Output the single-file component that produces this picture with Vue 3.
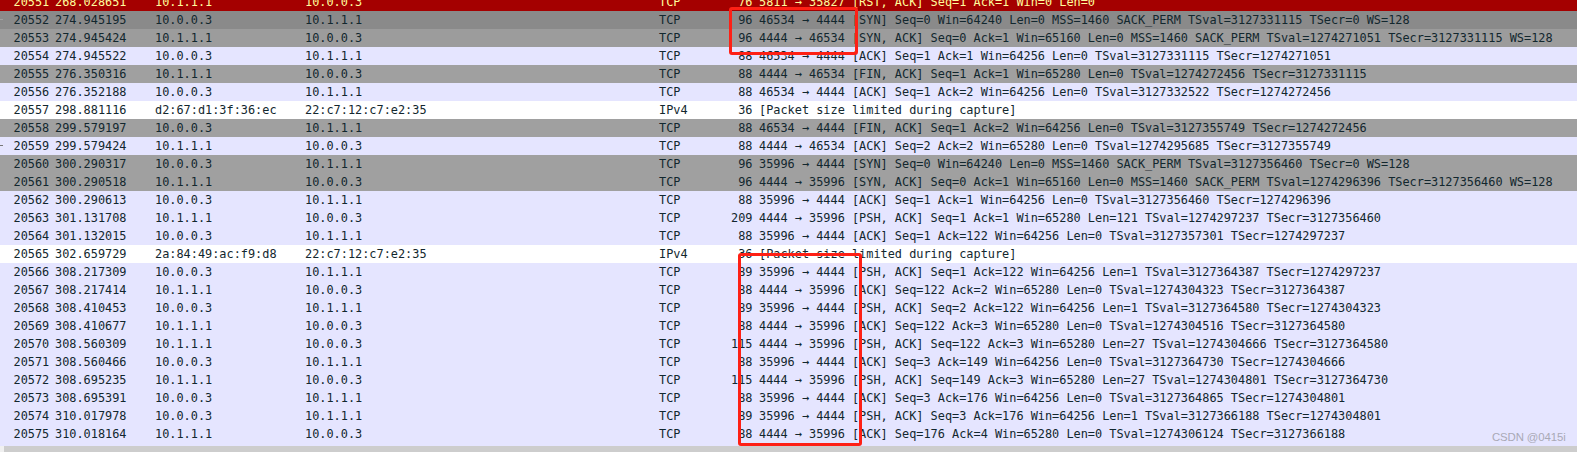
<script setup>
const raw = `20551|268.028651|10.1.1.1|10.0.0.3|TCP|76|5811 → 35827 [RST, ACK] Seq=1 Ack=1 Win=0 Len=0|rst
20552|274.945195|10.0.0.3|10.1.1.1|TCP|96|46534 → 4444 [SYN] Seq=0 Win=64240 Len=0 MSS=1460 SACK_PERM TSval=3127331115 TSecr=0 WS=128|syn
20553|274.945424|10.1.1.1|10.0.0.3|TCP|96|4444 → 46534 [SYN, ACK] Seq=0 Ack=1 Win=65160 Len=0 MSS=1460 SACK_PERM TSval=1274271051 TSecr=3127331115 WS=128|synack
20554|274.945522|10.0.0.3|10.1.1.1|TCP|88|46534 → 4444 [ACK] Seq=1 Ack=1 Win=64256 Len=0 TSval=3127331115 TSecr=1274271051|tcp
20555|276.350316|10.1.1.1|10.0.0.3|TCP|88|4444 → 46534 [FIN, ACK] Seq=1 Ack=1 Win=65280 Len=0 TSval=1274272456 TSecr=3127331115|gray
20556|276.352188|10.0.0.3|10.1.1.1|TCP|88|46534 → 4444 [ACK] Seq=1 Ack=2 Win=64256 Len=0 TSval=3127332522 TSecr=1274272456|tcp
20557|298.881116|d2:67:d1:3f:36:ec|22:c7:12:c7:e2:35|IPv4|36|[Packet size limited during capture]|white
20558|299.579197|10.0.0.3|10.1.1.1|TCP|88|46534 → 4444 [FIN, ACK] Seq=1 Ack=2 Win=64256 Len=0 TSval=3127355749 TSecr=1274272456|gray
20559|299.579424|10.1.1.1|10.0.0.3|TCP|88|4444 → 46534 [ACK] Seq=2 Ack=2 Win=65280 Len=0 TSval=1274295685 TSecr=3127355749|tcp
20560|300.290317|10.0.0.3|10.1.1.1|TCP|96|35996 → 4444 [SYN] Seq=0 Win=64240 Len=0 MSS=1460 SACK_PERM TSval=3127356460 TSecr=0 WS=128|gray
20561|300.290518|10.1.1.1|10.0.0.3|TCP|96|4444 → 35996 [SYN, ACK] Seq=0 Ack=1 Win=65160 Len=0 MSS=1460 SACK_PERM TSval=1274296396 TSecr=3127356460 WS=128|gray
20562|300.290613|10.0.0.3|10.1.1.1|TCP|88|35996 → 4444 [ACK] Seq=1 Ack=1 Win=64256 Len=0 TSval=3127356460 TSecr=1274296396|tcp
20563|301.131708|10.1.1.1|10.0.0.3|TCP|209|4444 → 35996 [PSH, ACK] Seq=1 Ack=1 Win=65280 Len=121 TSval=1274297237 TSecr=3127356460|tcp
20564|301.132015|10.0.0.3|10.1.1.1|TCP|88|35996 → 4444 [ACK] Seq=1 Ack=122 Win=64256 Len=0 TSval=3127357301 TSecr=1274297237|tcp
20565|302.659729|2a:84:49:ac:f9:d8|22:c7:12:c7:e2:35|IPv4|36|[Packet size limited during capture]|white
20566|308.217309|10.0.0.3|10.1.1.1|TCP|89|35996 → 4444 [PSH, ACK] Seq=1 Ack=122 Win=64256 Len=1 TSval=3127364387 TSecr=1274297237|tcp
20567|308.217414|10.1.1.1|10.0.0.3|TCP|88|4444 → 35996 [ACK] Seq=122 Ack=2 Win=65280 Len=0 TSval=1274304323 TSecr=3127364387|tcp
20568|308.410453|10.0.0.3|10.1.1.1|TCP|89|35996 → 4444 [PSH, ACK] Seq=2 Ack=122 Win=64256 Len=1 TSval=3127364580 TSecr=1274304323|tcp
20569|308.410677|10.1.1.1|10.0.0.3|TCP|88|4444 → 35996 [ACK] Seq=122 Ack=3 Win=65280 Len=0 TSval=1274304516 TSecr=3127364580|tcp
20570|308.560309|10.1.1.1|10.0.0.3|TCP|115|4444 → 35996 [PSH, ACK] Seq=122 Ack=3 Win=65280 Len=27 TSval=1274304666 TSecr=3127364580|tcp
20571|308.560466|10.0.0.3|10.1.1.1|TCP|88|35996 → 4444 [ACK] Seq=3 Ack=149 Win=64256 Len=0 TSval=3127364730 TSecr=1274304666|tcp
20572|308.695235|10.1.1.1|10.0.0.3|TCP|115|4444 → 35996 [PSH, ACK] Seq=149 Ack=3 Win=65280 Len=27 TSval=1274304801 TSecr=3127364730|tcp
20573|308.695391|10.0.0.3|10.1.1.1|TCP|88|35996 → 4444 [ACK] Seq=3 Ack=176 Win=64256 Len=0 TSval=3127364865 TSecr=1274304801|tcp
20574|310.017978|10.0.0.3|10.1.1.1|TCP|89|35996 → 4444 [PSH, ACK] Seq=3 Ack=176 Win=64256 Len=1 TSval=3127366188 TSecr=1274304801|tcp
20575|310.018164|10.1.1.1|10.0.0.3|TCP|88|4444 → 35996 [ACK] Seq=176 Ack=4 Win=65280 Len=0 TSval=1274306124 TSecr=3127366188|tcp`
const rows = raw.split('\n').map((l) => {
  const [no, time, src, dst, proto, len, info, kind] = l.split('|')
  return { no, time, src, dst, proto, len, info, kind }
})
</script>

<template>
  <div class="page">
    <div class="list">
      <div v-for="r in rows" :key="r.no" class="row" :class="r.kind">
        <span class="no">{{ r.no }}</span>
        <span>{{ r.time }}</span>
        <span>{{ r.src }}</span>
        <span>{{ r.dst }}</span>
        <span>{{ r.proto }}</span>
        <span class="len">{{ r.len }}</span>
        <span class="info">{{ r.info }}</span>
      </div>
    </div>
    <div class="filler"></div>
    <div class="scrollbar"><div class="track"></div></div>
    <div class="box box-a"></div>
    <div class="box box-b"></div>
    <span class="tick tick-a"></span>
    <span class="tick tick-b"></span>
    <span class="mark">CSDN @0415i</span>
  </div>
</template>

<style scoped>
.page {
  position: relative;
  width: 1577px;
  height: 452px;
  overflow: hidden;
  display: flex;
  flex-direction: column;
  background: #e5e5ff;
  font-family: "DejaVu Sans Mono", monospace;
  font-size: 11.88px;
  color: #12272e;
}
.list {
  margin-top: -7px;
  flex: none;
}
.row {
  height: 18px;
  line-height: 18px;
  display: grid;
  grid-template-columns: 55px 100px 150px 354px 40px 53.5px 1fr;
  white-space: pre;
}
.no { padding-left: 13.5px; }
.len { text-align: right; }
.info { padding-left: 6.5px; }
.rst { background: #a40000; color: #fffc9c; }
.syn { background: #8a8a8a; }
.synack { background: #9c9c9c; }
.gray { background: #a0a0a0; }
.tcp { background: #e5e5ff; }
.white { background: #ffffff; }
.filler { flex: 1; }
.scrollbar {
  flex: none;
  height: 6px;
  background: #f0f0f0;
  padding-left: 4px;
}
.track {
  height: 100%;
  background: #cdcdcd;
}
.box {
  position: absolute;
  box-sizing: border-box;
  border: 3px solid #fe2015;
  border-radius: 3px;
}
.box-a { left: 729px; top: 7px; width: 129px; height: 48px; }
.box-b { left: 738px; top: 253px; width: 124px; height: 193px; }
.tick {
  position: absolute;
  left: 0;
  width: 3px;
  height: 1px;
}
.tick-a { top: 19px; background: #a0a0a0; }
.tick-b { top: 145px; background: #777; }
.mark {
  position: absolute;
  left: 1492px;
  top: 430px;
  font-family: "Liberation Sans", sans-serif;
  font-size: 11.4px;
  letter-spacing: -0.12px;
  line-height: 15px;
  color: #a9a9b6;
}
</style>
